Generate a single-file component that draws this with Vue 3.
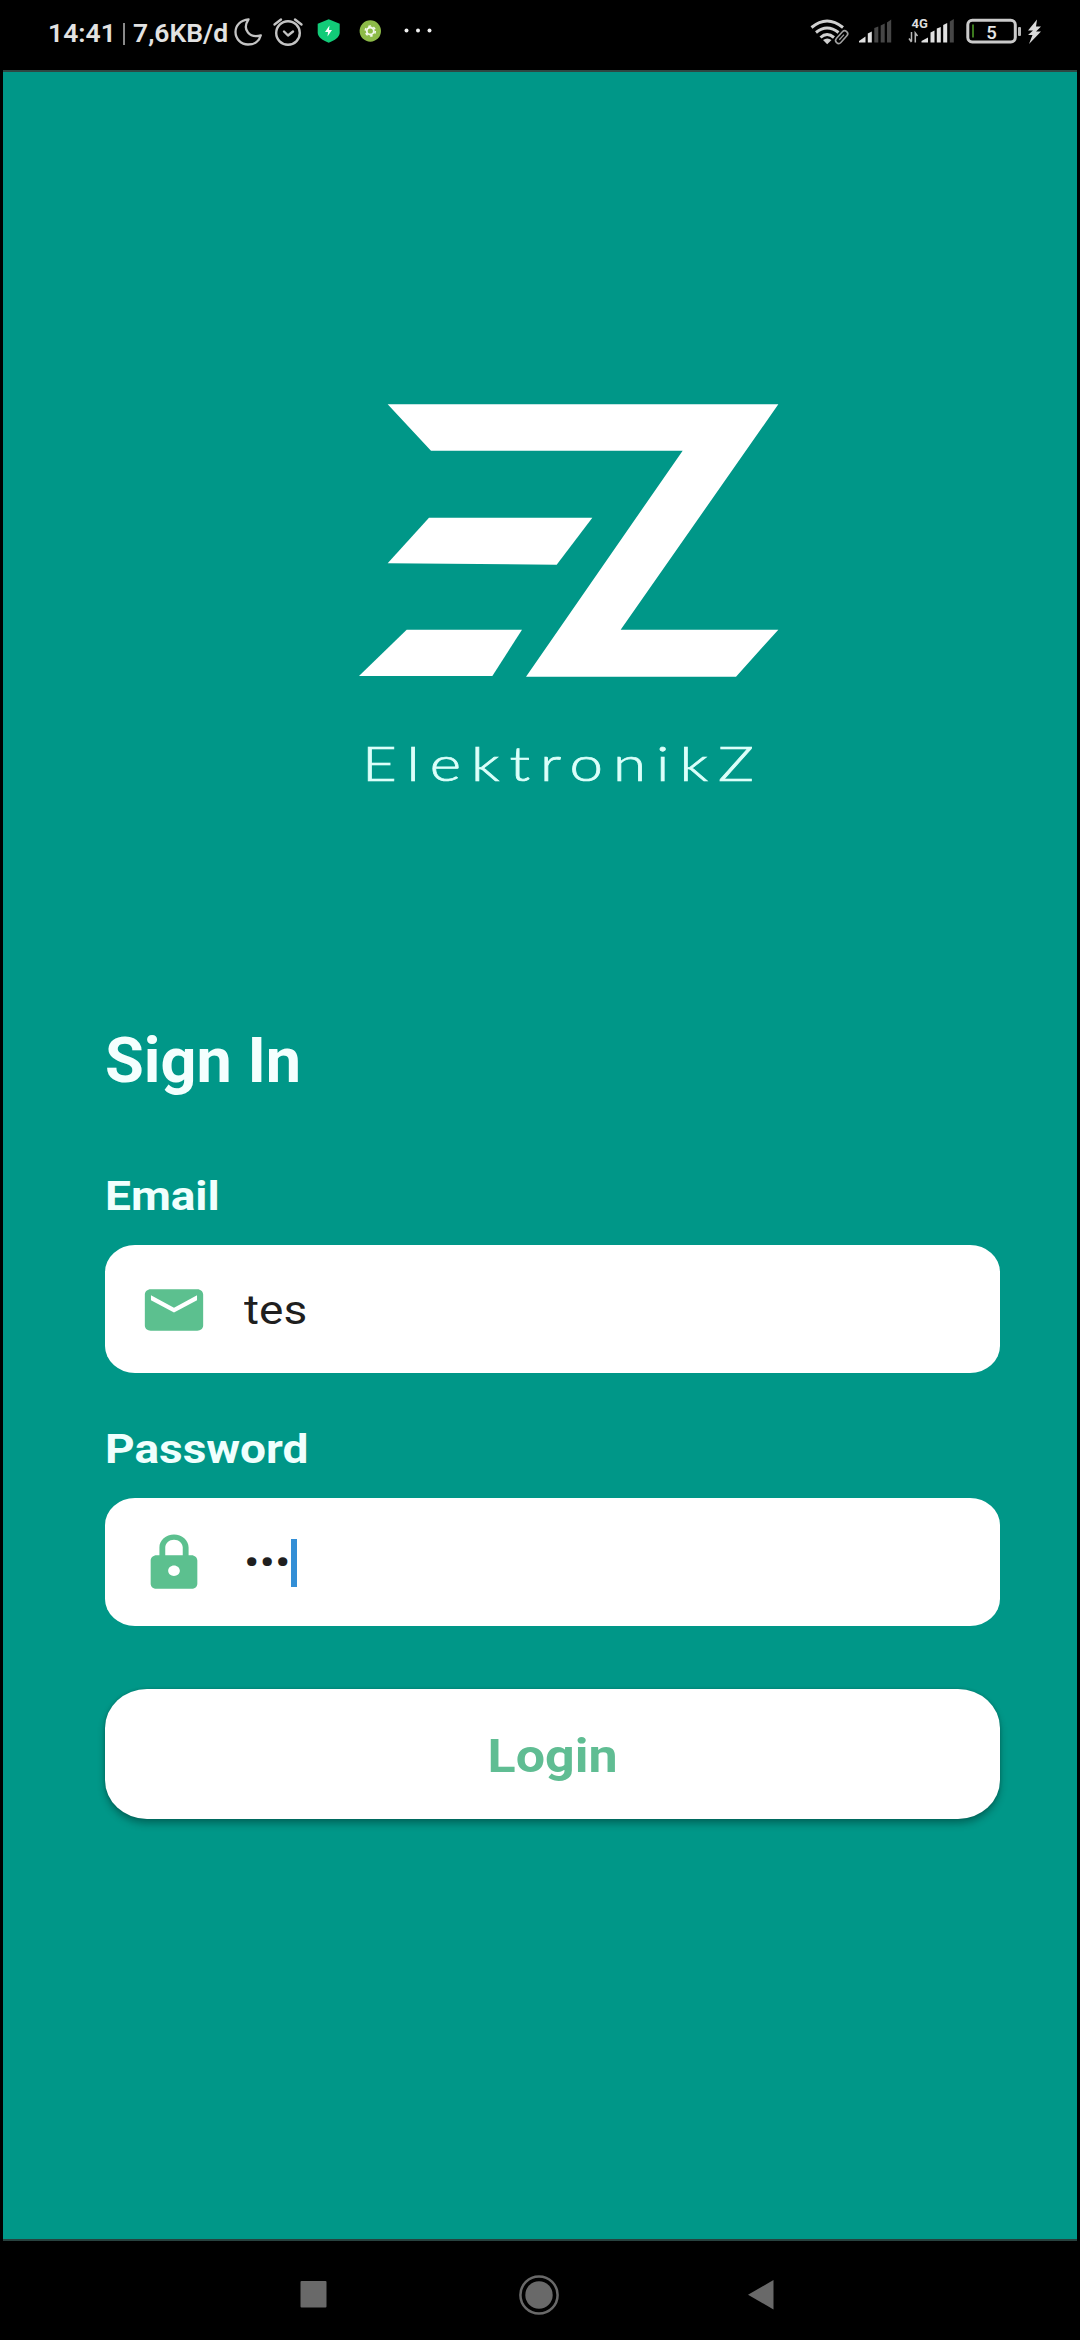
<script setup>
import { ref } from 'vue'

const email = ref('tes')
const password = ref('tes')
</script>

<template>
  <div class="phone">
    <header class="status">
      <span class="clock">14:41</span>
      <span class="divider"></span>
      <span class="speed">7,6KB/d</span>
      <svg class="left-icons" width="210" height="70" viewBox="225 0 210 70" fill="none">
        <path d="M248.500 19.300C240.500 20 235.500 25.500 235.500 32A12.500 12.500 0 0 0 248 44.500C254.500 44.500 259.500 41 260.800 35.300C250 38.500 241.500 30 248.500 19.300Z" stroke="#c4c4c4" stroke-width="2.300" stroke-linejoin="round" />
        <g stroke="#c4c4c4" stroke-width="2.400" stroke-linecap="round" stroke-linejoin="round">
          <circle cx="288" cy="33" r="11.800" />
          <path d="M284 31.500l4 4 5-4M274.500 24.500l6.500-5M301.500 24.500l-6.500-5" />
        </g>
        <path d="M328.700 19.300l11 4.500v9c0 4.500-5 7.500-11 10-6-2.500-11-5.500-11-10v-9z" fill="#12cb78" />
        <path d="M329.500 25.500l-4.500 6.500h3l-.5 4.500 4.500-6.500h-3z" fill="#fff" />
        <circle cx="370.300" cy="31" r="10.700" fill="#8dbb48" />
        <circle cx="370.300" cy="31" r="3.500" stroke="#f4f9ec" stroke-width="1.800" />
        <circle cx="370.300" cy="31" r="5" stroke="#f4f9ec" stroke-width="1.600" stroke-dasharray="2.600 2.636" />
        <g fill="#f0f0f0">
          <circle cx="406.500" cy="30.500" r="2" /><circle cx="418" cy="30.500" r="2" /><circle cx="429.500" cy="30.500" r="2" />
        </g>
      </svg>
      <svg class="right-icons" width="240" height="70" viewBox="805 0 240 70" fill="none">
        <g stroke="#d0d0d0" stroke-width="3">
          <path d="M810.500 27.500Q826 14.500 842 27.500" />
          <path d="M815 32.500Q826 23.500 837.500 32.500" />
          <path d="M819.500 37.500Q826 31.500 833 37.500" />
        </g>
        <path d="M822 40q4.300-3 8.500 0l-4.300 4.200z" fill="#d0d0d0" />
        <g transform="rotate(-48 840.500 37)">
          <rect x="833" y="34.200" width="15" height="6" rx="3" fill="#000" stroke="#a0a0a0" stroke-width="1.600" />
          <path d="M837 37.200h7" stroke="#a0a0a0" stroke-width="1.200" />
        </g>
        <path d="M858 42.500v-1.500l6.500-4.500v6zM866.800 42.500v-9l4-2v11z" fill="#e0e0e0" />
        <path d="M873.300 42.500v-14.500l4-1.500v16zM879.700 42.500v-17l4-2v19zM886 42.500v-20l4.200-3v23z" fill="#464646" />
        <text x="910.500" y="27.500" class="net">4G</text>
        <path d="M910.500 32v9.500M908 38.500l2.500 3.500M914.300 42.500v-9.500l2.200 3" stroke="#b8b8b8" stroke-width="1.500" />
        <path d="M920.500 42.500v-1.500l6.500-3.500v5zM929.500 42.500v-10l4-2v12zM935.800 42.500v-14l4-1.500v15.500zM942.200 42.500v-17.500l4-2v19.500z" fill="#e0e0e0" />
        <path d="M948.800 42.500v-21l4-2.500v23.500z" fill="#464646" />
        <rect x="966.800" y="20.300" width="47.500" height="21.700" rx="4.500" stroke="#cacaca" stroke-width="3" />
        <rect x="971" y="24.500" width="2" height="13" fill="#3c7a1e" />
        <rect x="1017" y="27" width="3" height="9" rx="1" fill="#b8b8b8" />
        <text x="985.300" y="38.500" class="level">5</text>
        <path d="M1036 19.500l-9 11h5l-5 4.500h4.500l-3.500 9 12-12.500h-5l5-5h-5z" fill="#dadada" />
      </svg>
    </header>

    <main class="screen">
      <div class="brand">
        <svg class="mark" width="420" height="273" viewBox="57 71 1260 819" fill="#fff">
          <path d="M143 72H1315L842 748H1315L1188 889H558L1028 211H273Z" />
          <path d="M267 412H757L650 553L143 549Z" />
          <path d="M200 748H546L457 887H57Z" />
        </svg>
        <div class="name">ElektronikZ</div>
      </div>

      <form class="form" @submit.prevent>
        <h1><span class="t-title">Sign In</span></h1>

        <div class="label"><span class="t-email">Email</span></div>
        <div class="field">
          <svg width="70" height="62" viewBox="0 0 24 24" preserveAspectRatio="none">
            <path d="M20 4H4c-1.100 0-2 .9-2 2v12c0 1.100.9 2 2 2h16c1.100 0 2-.9 2-2V6c0-1.100-.9-2-2-2zm-.1 4.200L12 13 4.100 8.200V6.300L12 11.100l7.900-4.800z" />
          </svg>
          <span class="value">{{ email }}</span>
        </div>

        <div class="label"><span class="t-password">Password</span></div>
        <div class="field">
          <svg width="70" height="62" viewBox="0 0 24 24" preserveAspectRatio="none">
            <path d="M18 9h-1V6c0-2.760-2.240-5-5-5S7 3.240 7 6v3H6c-1.100 0-2 .9-2 2v9c0 1.100.9 2 2 2h12c1.100 0 2-.9 2-2v-9c0-1.100-.9-2-2-2zm-6 8c-1.100 0-2-.9-2-2s.9-2 2-2 2 .9 2 2-.9 2-2 2zm3-8H9V6c0-1.650 1.350-3 3-3s3 1.350 3 3z" />
          </svg>
          <span class="value">{{ '•'.repeat(password.length) }}</span>
          <span class="caret"></span>
        </div>

        <button class="login" type="submit"><span class="t-login">Login</span></button>
      </form>
    </main>

    <nav class="nav">
      <svg width="480" height="60" viewBox="300 2265 480 60" fill="#696969">
        <rect x="300.500" y="2281" width="26" height="26.500" rx="1" />
        <circle cx="539" cy="2295" r="13.700" />
        <circle cx="539" cy="2295" r="18.600" fill="none" stroke="#696969" stroke-width="2.500" />
        <path d="M773.500 2280v29.500l-25.500-14.700z" />
      </svg>
    </nav>
  </div>
</template>

<style>
body {
  margin: 0;
  background: #000;
}
</style>

<style scoped>
.phone {
  width: 1080px;
  height: 2340px;
  display: flex;
  flex-direction: column;
  background: #000;
  overflow: hidden;
  font-family: Roboto, "Liberation Sans", sans-serif;
}

.status {
  height: 70px;
  flex: none;
  display: flex;
  align-items: flex-start;
  color: #e2e2e2;
  font-size: 26.500px;
  font-weight: 600;
  line-height: 32px;
  white-space: nowrap;
}
.clock {
  width: 75px;
  margin: 17px 0 0 48px;
}
.divider {
  width: 2px;
  height: 22px;
  margin-top: 23px;
  background: #8a8a8a;
}
.speed {
  width: 92px;
  margin: 17px 0 0 8px;
}
.left-icons {
  flex: none;
}
.right-icons {
  flex: none;
  margin: 0 34px 0 auto;
}
.net {
  font: 700 13px Roboto, sans-serif;
  fill: #dcdcdc;
}
.level {
  font: 500 18.500px Roboto, sans-serif;
  fill: #e6e6e6;
}

.screen {
  box-sizing: border-box;
  height: 2171px;
  flex: none;
  margin: 0 3px;
  border-top: 2px solid #2e4743;
  border-bottom: 2px solid #28423f;
  background: #009788;
}
.brand {
  height: 957px;
  box-sizing: border-box;
  padding: 332px 0 0 356px;
}
.mark {
  display: block;
}
.name {
  width: max-content;
  margin: 56px 0 0 3px;
  font-family: Lato, sans-serif;
  font-weight: 300;
  font-size: 48px;
  line-height: 60px;
  letter-spacing: 8px;
  color: #dcfffa;
  -webkit-text-stroke: 0.700px #dcfffa;
  transform: scaleX(1.250);
  transform-origin: 0 0;
}

.form {
  width: 895px;
  margin-left: 102px;
}
h1 {
  margin: 0 0 79px;
  font-size: 63px;
  line-height: 64px;
  font-weight: 700;
  color: #f4fffe;
}
h1 span,
.label span,
.login span {
  display: inline-block;
  transform-origin: 0 50%;
}
.label {
  height: 48px;
  margin-bottom: 25px;
  font-size: 40px;
  line-height: 49px;
  font-weight: 700;
  color: #f0fffd;
}
.t-email,
.t-password {
  transform: scaleX(1.15);
}
.field {
  height: 128px;
  box-sizing: border-box;
  padding: 1px 0 0 34px;
  display: flex;
  align-items: center;
  border-radius: 30px / 27px;
  background: #fff;
}
.field + .label {
  margin-top: 52px;
}
.field svg {
  flex: none;
  fill: #5cc08f;
}
.value {
  margin-left: 35px;
  padding-top: 3px;
  font-size: 40px;
  line-height: 48px;
  color: #1f1f1f;
  transform: scaleX(1.15);
  transform-origin: 0 50%;
}
.caret {
  width: 6.500px;
  height: 48px;
  margin-left: 6px;
  background: #338fd6;
}
.login {
  display: flex;
  align-items: center;
  justify-content: center;
  width: 100%;
  height: 130px;
  margin-top: 63px;
  padding: 3px 0 0;
  border: 0;
  border-radius: 42px / 39px;
  background: #fff;
  box-shadow: 0 5px 7px rgba(0, 40, 34, 0.380), 0 0 3px rgba(0, 40, 34, 0.250);
  font: 700 46px/54px Roboto, sans-serif;
  color: #60bd93;
}
.login span {
  transform-origin: 50% 50%;
  transform: scaleX(1.130);
}

.nav {
  height: 99px;
  display: flex;
  justify-content: center;
  padding-top: 24px;
  box-sizing: border-box;
}
</style>
